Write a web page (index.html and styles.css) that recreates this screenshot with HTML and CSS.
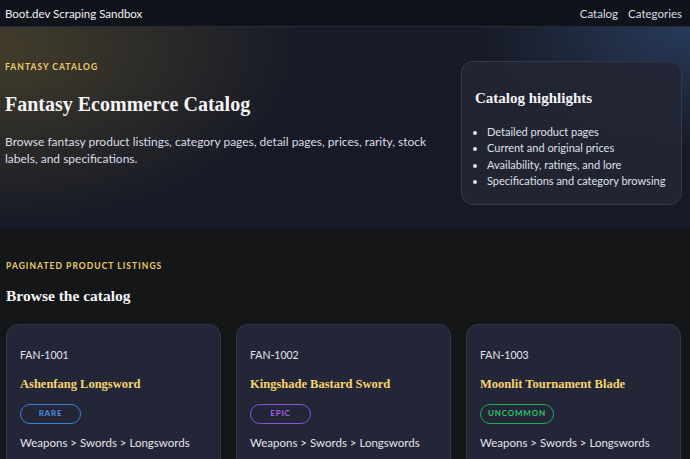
FILE: index.html
```html
<!DOCTYPE html>
<html lang="en">
<head>
    <meta charset="UTF-8">
    <meta name="viewport" content="width=device-width, initial-scale=1.0">
    <title>Boot.dev Scraping Sandbox</title>
    <link rel="stylesheet" href="styles.css">
</head>
<body>
    <header class="topbar">
        <a class="brand" href="#">Boot.dev Scraping Sandbox</a>
        <nav class="links">
            <a href="#">Catalog</a>
            <a href="#">Categories</a>
        </nav>
    </header>

    <section class="hero">
        <div class="hero-text">
            <p class="eyebrow">Fantasy catalog</p>
            <h1>Fantasy Ecommerce Catalog</h1>
            <p class="lead">Browse fantasy product listings, category pages, detail pages, prices, rarity, stock labels, and specifications.</p>
        </div>
        <aside class="highlights">
            <h2>Catalog highlights</h2>
            <ul>
                <li>Detailed product pages</li>
                <li>Current and original prices</li>
                <li>Availability, ratings, and lore</li>
                <li>Specifications and category browsing</li>
            </ul>
        </aside>
    </section>

    <main class="listing">
        <p class="eyebrow">Paginated product listings</p>
        <h2 class="section-title">Browse the catalog</h2>
        <div class="grid">
            <article class="card">
                <p class="sku">FAN-1001</p>
                <h3>Ashenfang Longsword</h3>
                <span class="badge rare">Rare</span>
                <p class="crumbs">Weapons &gt; Swords &gt; Longswords</p>
            </article>
            <article class="card">
                <p class="sku">FAN-1002</p>
                <h3>Kingshade Bastard Sword</h3>
                <span class="badge epic">Epic</span>
                <p class="crumbs">Weapons &gt; Swords &gt; Longswords</p>
            </article>
            <article class="card">
                <p class="sku">FAN-1003</p>
                <h3>Moonlit Tournament Blade</h3>
                <span class="badge uncommon">Uncommon</span>
                <p class="crumbs">Weapons &gt; Swords &gt; Longswords</p>
            </article>
        </div>
    </main>
</body>
</html>
```

FILE: styles.css
```css
* {
    box-sizing: border-box;
}
body {
    margin: 0;
    background: #151618;
    color: #e8e9ef;
    font-family: Lato, "Noto Sans", sans-serif;
    overflow: hidden;
}
a {
    color: inherit;
    text-decoration: none;
}
.topbar {
    display: flex;
    justify-content: space-between;
    align-items: center;
    height: 27px;
    padding: 0 8px 0 5px;
    background: #11131b;
    border-bottom: 1px solid #262938;
    font-size: 11.5px;
}
.brand {
    color: #f1f1f4;
}
.links {
    display: flex;
    gap: 10px;
    color: #d9dbe3;
}
.hero {
    display: flex;
    justify-content: space-between;
    align-items: flex-start;
    height: 201px;
    padding: 35px 8px 0 5px;
    background:
        radial-gradient(ellipse 400px 240px at 0% 10%, rgba(100, 88, 45, 0.55), transparent 75%),
        radial-gradient(ellipse 280px 160px at 100% 0%, rgba(50, 80, 125, 0.6), transparent 75%),
        linear-gradient(180deg, #181b27 0%, #171a26 100%);
}
.eyebrow {
    margin: 0;
    color: #f0cd66;
    font-size: 8.5px;
    font-weight: 700;
    letter-spacing: 1.05px;
    text-transform: uppercase;
}
.hero h1 {
    margin: 21px 0 0;
    font-family: "Liberation Serif", serif;
    font-size: 20px;
    font-weight: 700;
    color: #f4f4f6;
}
.lead {
    margin: 17px 0 0;
    width: 430px;
    font-size: 12px;
    line-height: 17px;
    color: #dcdde6;
}
.highlights {
    width: 221px;
    margin-top: -1px;
    padding: 28px 13px 14px;
    background: rgba(35, 38, 52, 0.9);
    border: 1px solid #353849;
    border-radius: 12px;
}
.highlights h2 {
    margin: 0;
    font-family: "Liberation Serif", serif;
    font-size: 15px;
    font-weight: 700;
    color: #f4f4f6;
}
.highlights ul {
    margin: 17px 0 0;
    padding-left: 12px;
    font-size: 11px;
    line-height: 16.4px;
    color: #dfe1ea;
}
.listing {
    padding: 33px 9px 0 6px;
}
.section-title {
    margin: 16px 0 0;
    font-family: "Liberation Serif", serif;
    font-size: 15.5px;
    font-weight: 700;
    color: #f4f4f6;
}
.grid {
    display: grid;
    grid-template-columns: repeat(3, 1fr);
    gap: 15px;
    margin-top: 19px;
}
.card {
    height: 160px;
    padding: 24px 13px;
    background: #232636;
    border: 1px solid #33374a;
    border-radius: 12px;
}
.sku {
    margin: 0;
    font-size: 10.5px;
    color: #e3e4ea;
}
.card h3 {
    margin: 16px 0 0;
    font-family: "Liberation Serif", serif;
    font-size: 12.5px;
    font-weight: 700;
    color: #f7d46e;
}
.badge {
    display: inline-block;
    min-width: 61px;
    margin-top: 12px;
    padding: 0 7px;
    height: 20px;
    line-height: 17px;
    border: 1.5px solid;
    border-radius: 10px;
    font-size: 8px;
    font-weight: 700;
    letter-spacing: 0.8px;
    text-align: center;
    text-transform: uppercase;
}
.rare {
    color: #4b8fe0;
    border-color: #3a7fd6;
}
.epic {
    color: #a163ee;
    border-color: #8b52de;
}
.uncommon {
    color: #2fc46a;
    border-color: #26a85a;
}
.crumbs {
    margin: 12px 0 0;
    font-size: 11.5px;
    color: #e3e4ea;
}
```
